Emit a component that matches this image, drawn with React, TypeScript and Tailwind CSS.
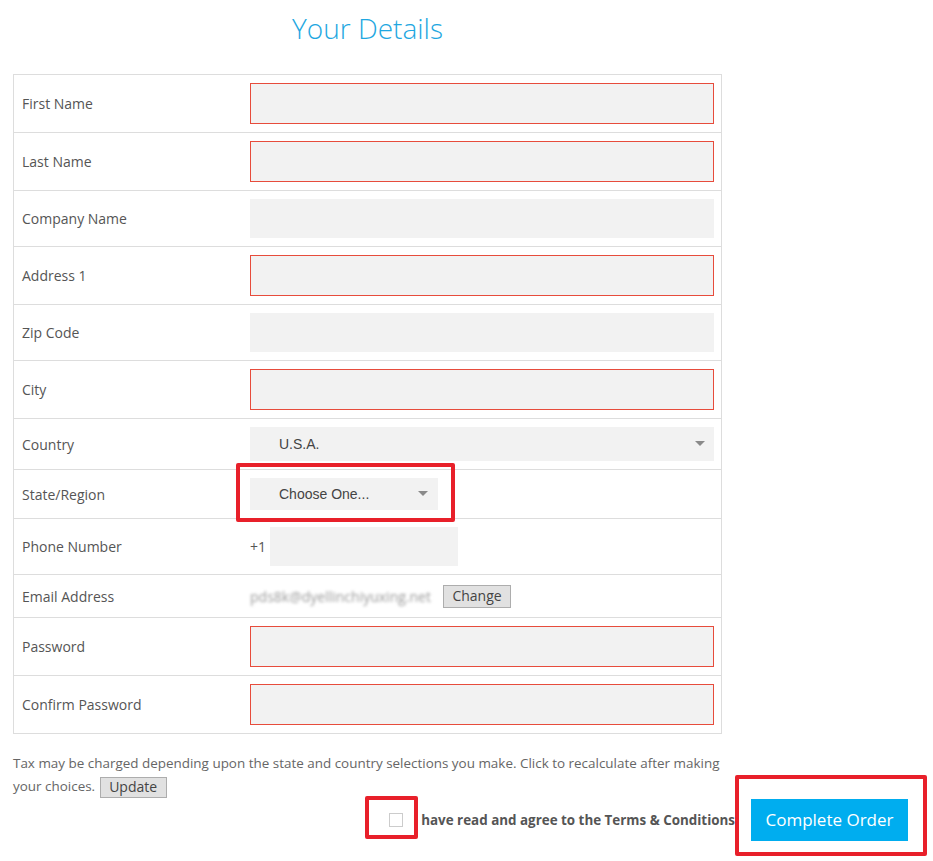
import React from "react";

const font = { fontFamily: '"Open Sans", "Liberation Sans", sans-serif' };

function Label({ children }: { children: React.ReactNode }) {
  return (
    <div className="w-[236px] shrink-0 pl-[8px] text-[14px] text-[#555]">{children}</div>
  );
}

function Row({
  label,
  children,
  h,
  last,
}: {
  label: string;
  children: React.ReactNode;
  h: string;
  last?: boolean;
}) {
  return (
    <div className={`flex items-center ${h} ${last ? "" : "border-b border-[#dddddd]"}`}>
      <Label>{label}</Label>
      <div className="flex flex-1 items-center pr-[7px]">{children}</div>
    </div>
  );
}

function RedInput() {
  return <div className="h-[41px] w-full border border-[#e74c3c] bg-[#f2f2f2]" />;
}
function PlainInput() {
  return <div className="h-[39px] w-full bg-[#f2f2f2]" />;
}

function Caret() {
  return (
    <svg width="10" height="6" viewBox="0 0 10 6" className="shrink-0">
      <path d="M0 0 L10 0 L5 5 Z" fill="#8a8a8a" />
    </svg>
  );
}

export default function App() {
  return (
    <div className="relative h-[861px] w-[933px] bg-white" style={font}>
      <div className="w-[735px] pt-[8px] text-center text-[28px] font-light leading-[40px] text-[#1ea7e1]">
        Your Details
      </div>
      <div className="pl-[13px]">
        <div className="mt-[26px] w-[709px] border border-[#dddddd]">
          <Row label="First Name" h="h-[58px]">
            <RedInput />
          </Row>
          <Row label="Last Name" h="h-[58px]">
            <RedInput />
          </Row>
          <Row label="Company Name" h="h-[56px]">
            <PlainInput />
          </Row>
          <Row label="Address 1" h="h-[58px]">
            <RedInput />
          </Row>
          <Row label="Zip Code" h="h-[56px]">
            <PlainInput />
          </Row>
          <Row label="City" h="h-[58px]">
            <RedInput />
          </Row>
          <Row label="Country" h="h-[51px]">
            <div
              className="flex h-[34px] w-full items-center justify-between bg-[#f2f2f2] pl-[29px] pr-[9px] text-[14px] text-[#444]"
              style={{ fontFamily: '"Liberation Sans", Arial, sans-serif' }}
            >
              <span>U.S.A.</span>
              <Caret />
            </div>
          </Row>
          <Row label="State/Region" h="h-[49px]">
            <div className="relative">
              <div
                className="flex h-[32px] w-[188px] items-center justify-between bg-[#f2f2f2] pl-[29px] pr-[10px] text-[14px] text-[#444]"
                style={{ fontFamily: '"Liberation Sans", Arial, sans-serif' }}
              >
                <span>Choose One...</span>
                <Caret />
              </div>
              <div className="pointer-events-none absolute left-[-14px] top-[-15px] h-[59px] w-[219px] rounded-[2px] border-[4px] border-[#e8202a]" />
            </div>
          </Row>
          <Row label="Phone Number" h="h-[56px]">
            <span className="w-[20px] text-[14px] text-[#555]">+1</span>
            <div className="h-[39px] w-[188px] bg-[#f2f2f2]" />
          </Row>
          <Row label="Email Address" h="h-[43px]">
            <span className="w-[187px] overflow-hidden whitespace-nowrap text-[14px] tracking-[0px] text-[#9a9a9a] blur-[1.4px]">
              pds8k@dyellinchiyuxing.net
            </span>
            <button className="ml-[6px] h-[23px] w-[68px] border border-[#adadad] bg-[#e1e1e1] text-[14px] leading-[20px] text-[#444]">
              Change
            </button>
          </Row>
          <Row label="Password" h="h-[58px]">
            <RedInput />
          </Row>
          <Row label="Confirm Password" h="h-[57px]" last>
            <RedInput />
          </Row>
        </div>
        <p className="mt-[18px] w-[716px] text-[13.45px] leading-[23px] text-[#666]">
          Tax may be charged depending upon the state and country selections you make. Click to
          recalculate after making your choices.{" "}
          <button className="ml-[1px] inline-block h-[21px] w-[67px] border border-[#adadad] bg-[#e1e1e1] align-middle text-[14px] leading-[18px] text-[#444]">
            Update
          </button>
        </p>
      </div>
      <div className="mt-[1px] flex h-[42px] items-center justify-end pr-[25px]">
        <div className="relative flex items-center">
          <span className="block h-[14px] w-[14px] border border-[#cccccc] bg-white" />
          <div className="pointer-events-none absolute left-[-24px] top-[-17px] z-10 h-[43px] w-[53px] rounded-[2px] border-[4px] border-[#e8202a]" />
        </div>
        <span className="ml-[10px] text-[13.4px] font-bold text-[#555]">
          I have read and agree to the Terms &amp; Conditions
        </span>
        <div className="relative ml-[16px]">
          <button className="h-[42px] w-[157px] bg-[#00adef] text-[17px] text-white">
            Complete Order
          </button>
          <div className="pointer-events-none absolute left-[-16px] top-[-24px] h-[81px] w-[192px] rounded-[2px] border-[4px] border-[#e8202a]" />
        </div>
      </div>
    </div>
  );
}
